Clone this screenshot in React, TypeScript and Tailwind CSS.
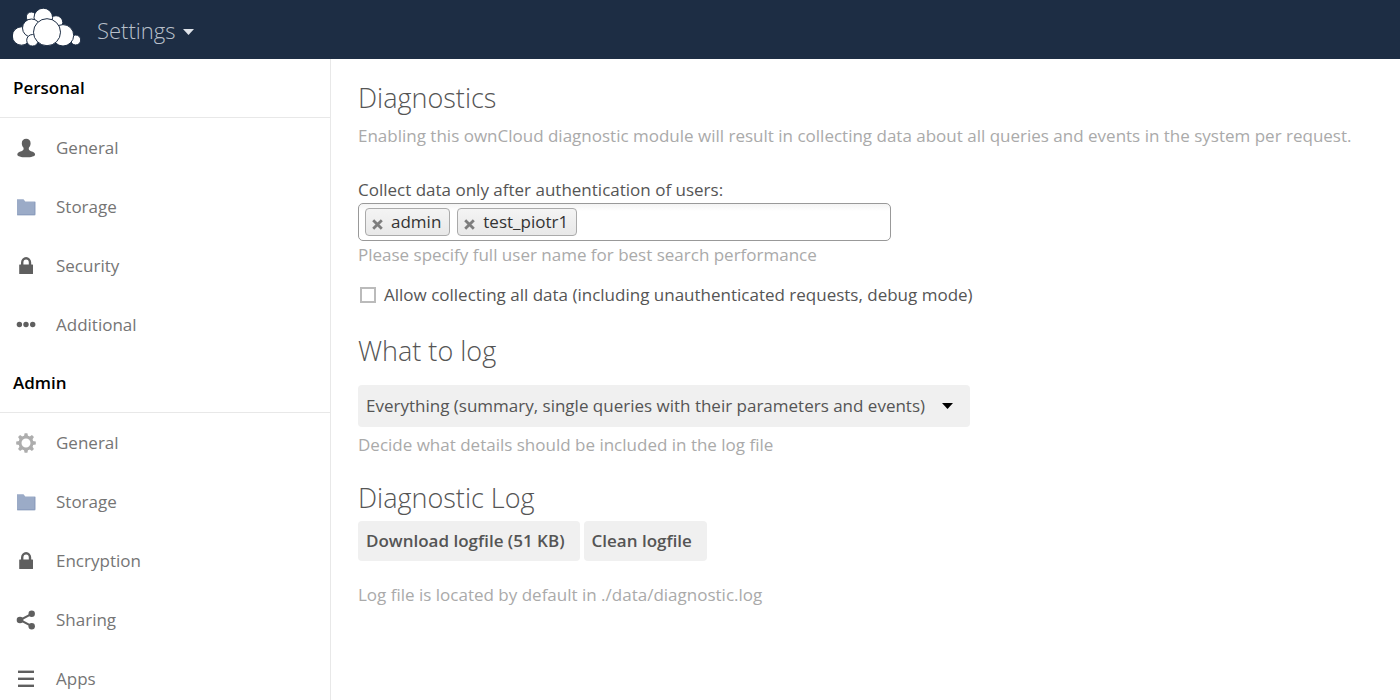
import type { ReactNode } from 'react';

const iconClass = 'h-5 w-5 shrink-0';

function UserIcon() {
  return (
    <svg className={iconClass} viewBox="0 0 20 20" fill="#5f5f5f" aria-hidden="true">
      <path d="M10.2 0.8C7.6 0.8 5.8 2.6 5.8 5.2c0 1.9.7 3.2 1.6 4.4.3.5.3 1.700 0 2.100-.4.8-1.600 1.300-3 1.900C2.600 14.300 1.300 15 1.300 16.700c0 1.500 3.900 2.600 8.900 2.600s8.900-1.100 8.900-2.600c0-1.700-1.300-2.400-3.100-3.100-1.400-.6-2.600-1.100-3-1.900-.3-.4-.3-1.600 0-2.100.9-1.200 1.600-2.500 1.600-4.400 0-2.600-1.800-4.400-4.400-4.400z" />
    </svg>
  );
}

function FolderIcon() {
  return (
    <svg className={iconClass} viewBox="0 0 20 20" aria-hidden="true">
      <path d="M1 2.200h6.500l1.800 2.300h10v13.700H1z" fill="#9babc7" />
      <path d="M1.500 17.700h17.300V5" fill="none" stroke="#8a9cbc" strokeWidth="1" />
    </svg>
  );
}

function LockIcon() {
  return (
    <svg className={iconClass} viewBox="0 0 20 20" aria-hidden="true">
      <path d="M6.200 9V6.500a3.900 4.300 0 0 1 7.800 0V9" fill="none" stroke="#5f5f5f" strokeWidth="2.400" />
      <rect x="3.200" y="8.600" width="13.800" height="9.400" rx="0.500" fill="#5f5f5f" />
    </svg>
  );
}

function DotsIcon() {
  return (
    <svg className={iconClass} viewBox="0 0 20 20" fill="#5f5f5f" aria-hidden="true">
      <circle cx="3.400" cy="9.500" r="2.700" />
      <circle cx="10" cy="9.500" r="2.700" />
      <circle cx="16.700" cy="9.500" r="2.700" />
    </svg>
  );
}

function GearIcon() {
  return (
    <svg className={iconClass} viewBox="-10 -10 20 20" aria-hidden="true">
      <circle r="6" fill="none" stroke="#adadad" strokeWidth="3" />
      {[0, 45, 90, 135, 180, 225, 270, 315].map((angle) => (
        <path key={angle} d="M-2.100-6.500L-1.400-9.800H1.400L2.100-6.500z" fill="#adadad" transform={`rotate(${angle})`} />
      ))}
    </svg>
  );
}

function ShareIcon() {
  return (
    <svg className={iconClass} viewBox="0 0 20 20" fill="#5f5f5f" aria-hidden="true">
      <path d="M15.700 3.800L4 10l11.700 6.200" fill="none" stroke="#5f5f5f" strokeWidth="2" />
      <circle cx="4" cy="10" r="3.300" />
      <circle cx="15.700" cy="3.800" r="3.200" />
      <circle cx="15.700" cy="16.200" r="3.200" />
    </svg>
  );
}

function ListIcon() {
  return (
    <svg className={iconClass} viewBox="0 0 20 20" fill="#5f5f5f" aria-hidden="true">
      <rect x="2" y="1.600" width="16" height="2.400" />
      <rect x="2" y="8.600" width="16" height="2.400" />
      <rect x="2" y="15.600" width="16" height="2.400" />
    </svg>
  );
}

function Logo() {
  return (
    <svg className="h-10 w-[68px]" viewBox="13 8 68 40" fill="#fff" stroke="#1d2d44" strokeWidth="1" role="img" aria-label="ownCloud">
      <circle cx="31.300" cy="17" r="5" />
      <circle cx="56" cy="22.500" r="6.800" />
      <circle cx="43.300" cy="17.500" r="9.300" />
      <circle cx="21.500" cy="36" r="9.200" />
      <circle cx="31.500" cy="28" r="9" />
      <circle cx="32.500" cy="40.300" r="5.800" />
      <circle cx="75.700" cy="40" r="5" />
      <circle cx="63" cy="35.300" r="10.700" />
      <circle cx="47" cy="32.200" r="13.500" />
    </svg>
  );
}

type Item = { label: string; icon: ReactNode };

const personal: Item[] = [
  { label: 'General', icon: <UserIcon /> },
  { label: 'Storage', icon: <FolderIcon /> },
  { label: 'Security', icon: <LockIcon /> },
  { label: 'Additional', icon: <DotsIcon /> },
];

const admin: Item[] = [
  { label: 'General', icon: <GearIcon /> },
  { label: 'Storage', icon: <FolderIcon /> },
  { label: 'Encryption', icon: <LockIcon /> },
  { label: 'Sharing', icon: <ShareIcon /> },
  { label: 'Apps', icon: <ListIcon /> },
];

function NavGroup({ title, items }: { title: string; items: Item[] }) {
  return (
    <section>
      <h2 className="flex h-[59px] items-center border-b border-[#e8e8e8] pl-[13px] font-semibold text-black">{title}</h2>
      <ul>
        {items.map((item) => (
          <li key={item.label}>
            <a href="#" className="flex h-[59px] items-center gap-5 pl-4 text-[#757575]">
              {item.icon}
              {item.label}
            </a>
          </li>
        ))}
      </ul>
    </section>
  );
}

function Tag({ name }: { name: string }) {
  return (
    <span className="flex h-7 items-center gap-2 rounded border border-[#aaa] bg-linear-to-b from-[#f4f4f4] to-[#e8e8e8] pr-2 pl-1.5 leading-6 text-[#333]">
      <button type="button" aria-label={`Remove ${name}`} className="pt-1">
        <svg className="h-[11px] w-[11px]" viewBox="0 0 11 11" fill="none" stroke="#7d7d7d" strokeWidth="2.800" aria-hidden="true">
          <path d="M1.200 1.200l8.600 8.600M9.800 1.200l-8.600 8.600" />
        </svg>
      </button>
      {name}
    </span>
  );
}

const headingClass = 'text-[27px] leading-9 font-light text-[#555]';
const hintClass = 'text-[#aaa]';
const buttonClass = 'h-10 rounded-[4px] bg-[#f0f0f0] pr-[15px] pl-2 font-semibold text-[#555]';

export default function App() {
  return (
    <div className="flex h-screen flex-col overflow-hidden bg-white font-['Open_Sans',sans-serif] text-[17px] leading-6">
      <header className="flex h-[59px] shrink-0 items-center bg-[#1d2d44] pb-[3px] pl-[13px]">
        <Logo />
        <button type="button" className="flex items-center gap-2 pt-1 pl-4 text-[22px] leading-8 font-light text-[#b9c0cb]">
          Settings
          <svg className="mt-1 h-1.5 w-[11px]" viewBox="0 0 11 6" fill="#dfe3ea" aria-hidden="true">
            <path d="M0 0h11L5.500 6z" />
          </svg>
        </button>
      </header>
      <div className="flex min-h-0 flex-1">
        <nav className="w-[331px] shrink-0 overflow-hidden border-r border-[#e8e8e8]">
          <NavGroup title="Personal" items={personal} />
          <NavGroup title="Admin" items={admin} />
        </nav>
        <main className="min-w-0 flex-1 pt-[21px] pl-[27px] text-[#555]">
          <section>
            <h1 className={headingClass}>Diagnostics</h1>
            <p className={`${hintClass} mt-2 whitespace-nowrap`}>
              Enabling this ownCloud diagnostic module will result in collecting data about all queries and events in the system per request.
            </p>
            <label htmlFor="users" className="mt-[30px] block">
              Collect data only after authentication of users:
            </label>
            <div className="mt-px flex h-[38px] max-w-[533px] items-center gap-[7px] rounded-[5px] border border-[#999] bg-linear-to-b from-[#f4f4f4] to-white to-20% px-1.5">
              <Tag name="admin" />
              <Tag name="test_piotr1" />
              <input id="users" type="text" className="min-w-0 flex-1 bg-transparent outline-none" />
            </div>
            <p className={`${hintClass} mt-0.5`}>Please specify full user name for best search performance</p>
            <label className="mt-4 flex items-center gap-2">
              <input type="checkbox" className="ml-0.5 h-4 w-4 appearance-none border-2 border-[#bbb] bg-white" />
              Allow collecting all data (including unauthenticated requests, debug mode)
            </label>
          </section>
          <section className="mt-[26px]">
            <h2 className={headingClass}>What to log</h2>
            <div className="relative mt-4 max-w-[612px]">
              <select aria-label="What to log" className="block h-[42px] w-full appearance-none rounded-[4px] bg-[#f0f0f0] pr-8 pl-2 text-[#555]">
                <option>Everything (summary, single queries with their parameters and events)</option>
              </select>
              <svg className="pointer-events-none absolute top-[18px] right-[17px] h-1.5 w-[11px]" viewBox="0 0 11 6" fill="#000" aria-hidden="true">
                <path d="M0 0h11L5.500 6z" />
              </svg>
            </div>
            <p className={`${hintClass} mt-1.5`}>Decide what details should be included in the log file</p>
          </section>
          <section className="mt-[23px]">
            <h2 className={headingClass}>Diagnostic Log</h2>
            <div className="mt-[5px] flex gap-1">
              <button type="button" className={buttonClass}>Download logfile (51 KB)</button>
              <button type="button" className={buttonClass}>Clean logfile</button>
            </div>
            <p className={`${hintClass} mt-[22px]`}>Log file is located by default in ./data/diagnostic.log</p>
          </section>
        </main>
      </div>
    </div>
  );
}
